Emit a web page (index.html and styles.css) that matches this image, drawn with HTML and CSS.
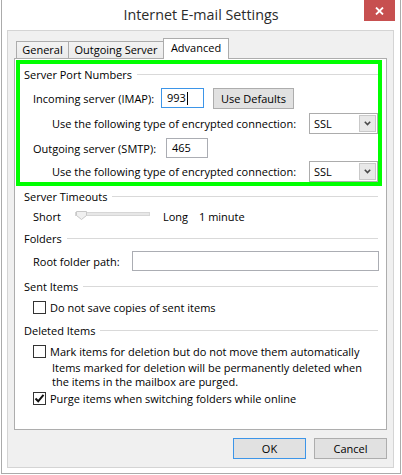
FILE: index.html
```html
<!DOCTYPE html>
<html>
<head>
<meta charset="utf-8">
<link rel="stylesheet" href="styles.css">
</head>
<body>
<div class="window">
  <div class="titlebar">
    <div class="title">Internet E-mail Settings</div>
    <div class="close"><svg width="9" height="8" viewBox="0 0 9 8"><path d="M1 0.5 L8 7.5 M8 0.5 L1 7.5" stroke="#fff" stroke-width="1.8"/></svg></div>
  </div>
  <div class="client">
    <div class="tabs">
      <div class="tab t-general">General</div>
      <div class="tab t-outgoing">Outgoing Server</div>
      <div class="tab t-advanced active">Advanced</div>
    </div>
    <div class="panel">
      <div class="highlight">
        <div class="group-head"><span>Server Port Numbers</span><i class="rule"></i></div>
        <div class="row r-in">
          <span class="label l-in">Incoming server (IMAP):</span>
          <div class="input focused port-in">993<span class="caret"></span></div>
          <div class="btn defaults">Use Defaults</div>
        </div>
        <div class="row r-enc1">
          <span class="label l-enc">Use the following type of encrypted connection:</span>
          <div class="select">SSL<span class="drop"><svg width="7" height="5" viewBox="0 0 7 5"><path d="M0.8 0.8 L3.5 3.6 L6.2 0.8" fill="none" stroke="#4a4a4a" stroke-width="1.6"/></svg></span></div>
        </div>
        <div class="row r-out">
          <span class="label l-out">Outgoing server (SMTP):</span>
          <div class="input port-out">465</div>
        </div>
        <div class="row r-enc2">
          <span class="label l-enc">Use the following type of encrypted connection:</span>
          <div class="select">SSL<span class="drop"><svg width="7" height="5" viewBox="0 0 7 5"><path d="M0.8 0.8 L3.5 3.6 L6.2 0.8" fill="none" stroke="#4a4a4a" stroke-width="1.6"/></svg></span></div>
        </div>
      </div>

      <div class="group g-timeouts">
        <div class="group-head"><span>Server Timeouts</span><i class="rule"></i></div>
        <div class="row r-slider">
          <span class="label l-short">Short</span>
          <svg class="slider" width="75" height="10" viewBox="0 0 75 10">
            <rect x="0.5" y="1.5" width="74" height="3" fill="#e7e7e7" stroke="#d6d6d6"/>
            <path d="M1.5 0.5 H11.5 V4.5 L6.5 8.5 L1.5 4.5 Z" fill="#f0f0f0" stroke="#c8c8c8"/>
          </svg>
          <span class="long">Long</span>
          <span>1 minute</span>
        </div>
      </div>

      <div class="group g-folders">
        <div class="group-head"><span>Folders</span><i class="rule"></i></div>
        <div class="row r-root">
          <span class="label l-root">Root folder path:</span>
          <div class="input root"></div>
        </div>
      </div>

      <div class="group g-sent">
        <div class="group-head"><span>Sent Items</span><i class="rule"></i></div>
        <div class="row check-row">
          <span class="checkbox"></span>
          <span class="check-label">Do not save copies of sent items</span>
        </div>
      </div>

      <div class="group g-deleted">
        <div class="group-head"><span>Deleted Items</span><i class="rule"></i></div>
        <div class="row check-row">
          <span class="checkbox"></span>
          <span class="check-label">Mark items for deletion but do not move them automatically</span>
        </div>
        <p class="note">Items marked for deletion will be permanently deleted when<br>the items in the mailbox are purged.</p>
        <div class="row check-row r-purge">
          <span class="checkbox checked"><svg width="11" height="11" viewBox="0 0 11 11"><path d="M1.5 5.5 L4.2 8.3 L9.5 1.8" fill="none" stroke="#111" stroke-width="2"/></svg></span>
          <span class="check-label">Purge items when switching folders while online</span>
        </div>
      </div>
    </div>
    <div class="buttons">
      <div class="btn ok">OK</div>
      <div class="btn cancel">Cancel</div>
    </div>
  </div>
</div>
</body>
</html>
```

FILE: styles.css
```css
* { box-sizing: border-box; }
html, body { margin: 0; padding: 0; background: #fff; }
body {
  width: 402px;
  height: 475px;
  overflow: hidden;
  font-family: "Open Sans", "Noto Sans", sans-serif;
  font-size: 11px;
  color: #000;
}
.window {
  margin-left: 1px;
  width: 400px;
  height: 474px;
  border: 1px solid #ababab;
  border-top: 0;
  background: #fff;
  padding: 0 6px 5px 5px;
  display: flex;
  flex-direction: column;
}
.titlebar {
  height: 30px;
  flex: none;
  margin: 0 -6px 0 -5px;
  display: grid;
  grid-template-columns: 1fr auto 1fr;
  align-items: start;
}
.title {
  grid-column: 2;
  font-size: 14.3px;
  line-height: 30px;
  color: #2b2b2b;
  white-space: nowrap;
}
.close {
  grid-column: 3;
  justify-self: end;
  margin-right: 5px;
  width: 31px;
  height: 21px;
  background: #c75050;
  display: flex;
  align-items: center;
  justify-content: center;
  padding-top: 1px;
}
.close svg { display: block; }
.client {
  flex: 1;
  border: 1px solid #d4d4d4;
  background: #f0f0f0;
  padding: 7px 6px 8px 6px;
  display: flex;
  flex-direction: column;
}
.tabs {
  display: flex;
  align-items: flex-end;
  height: 20px;
  padding-left: 2px;
}
.tab {
  height: 17px;
  border: 1px solid #acacac;
  border-bottom: 0;
  background: linear-gradient(#f3f3f3, #ebebeb);
  text-align: center;
  line-height: 16px;
  white-space: nowrap;
}
.t-general { width: 53px; }
.t-outgoing { width: 96px; margin-left: -1px; }
.t-advanced { width: 66px; margin-left: -1px; }
.tab.active {
  height: 21px;
  margin-bottom: -1px;
  background: #fff;
  line-height: 18px;
  position: relative;
  z-index: 1;
}
.panel {
  height: 372px;
  border: 1px solid #adadad;
  background: #fff;
}
.highlight {
  margin: 1px 4px 0 1px;
  border: 4px solid #00ff00;
  padding: 0 0 0 4px;
}
.group { margin: 0 8px 0 9px; }
.group-head {
  display: flex;
  align-items: center;
  height: 15px;
  line-height: 15px;
  margin-top: 3px;
  white-space: nowrap;
}
.rule {
  flex: 1;
  height: 1px;
  background: #d9d9d9;
  margin-left: 5px;
}
.row {
  display: flex;
  align-items: center;
  white-space: nowrap;
}
.label { flex: none; }
.r-in { height: 21px; margin-top: 6px; padding-left: 9px; align-items: flex-start; }
.r-in .label { line-height: 21px; }
.l-in { width: 128px; }
.l-enc { width: 257px; }
.l-out { width: 133px; }
.r-enc1 { height: 21px; margin-top: 4px; padding-left: 28px; }
.r-out { height: 20px; margin-top: 4px; padding-left: 9px; }
.r-enc2 { height: 21px; margin-top: 3px; padding-left: 28px; }
.input {
  height: 20px;
  border: 1px solid #abadb3;
  background: #fff;
  padding-left: 5px;
  line-height: 18px;
  display: flex;
  align-items: center;
}
.input.focused { border-color: #3d95e8; }
.port-in { width: 43px; }
.port-out { width: 42px; }
.caret {
  display: inline-block;
  width: 1px;
  height: 13px;
  background: #000;
  margin-left: 1px;
}
.btn {
  height: 21px;
  border: 1px solid #adadad;
  background: #e1e1e1;
  text-align: center;
  line-height: 19px;
}
.defaults { width: 81px; margin-left: 9px; }
.select {
  width: 69px;
  height: 21px;
  border: 1px solid #acacac;
  background: #fff;
  display: flex;
  align-items: center;
  justify-content: space-between;
  padding: 1px 1px 1px 4px;
}
.drop {
  width: 17px;
  height: 17px;
  border: 1px solid #c9c9c9;
  background: #e8e8e8;
  display: flex;
  align-items: center;
  justify-content: center;
}
.drop svg { display: block; }
.g-timeouts { margin-top: 0; }
.r-slider { height: 15px; margin-top: 5px; padding-left: 9px; }
.l-short { width: 42px; }
.slider { display: block; flex: none; margin-top: -1px; }
.long { width: 36px; margin-left: 13px; }
.g-folders .group-head { margin-top: 7px; }
.r-root { height: 20px; margin-top: 5px; padding-left: 9px; }
.l-root { width: 99px; }
.input.root { flex: 1; margin-right: -1px; }
.g-sent .group-head { margin-top: 8px; }
.g-deleted .group-head { margin-top: 8px; }
.check-row { height: 15px; margin-top: 6px; padding-left: 9px; }
.checkbox {
  flex: none;
  width: 13px;
  height: 13px;
  border: 1px solid #333;
  background: #fff;
  display: flex;
  align-items: center;
  justify-content: center;
}
.checkbox svg { display: block; }
.check-label { margin-left: 4px; }
.note {
  margin: 2px 0 0 28px;
  line-height: 14px;
}
.r-purge { margin-top: 2px; }
.buttons {
  display: flex;
  justify-content: flex-end;
  gap: 8px;
  margin-top: 8px;
}
.ok, .cancel { width: 73px; }
.ok { border-color: #3d95e8; }
```
